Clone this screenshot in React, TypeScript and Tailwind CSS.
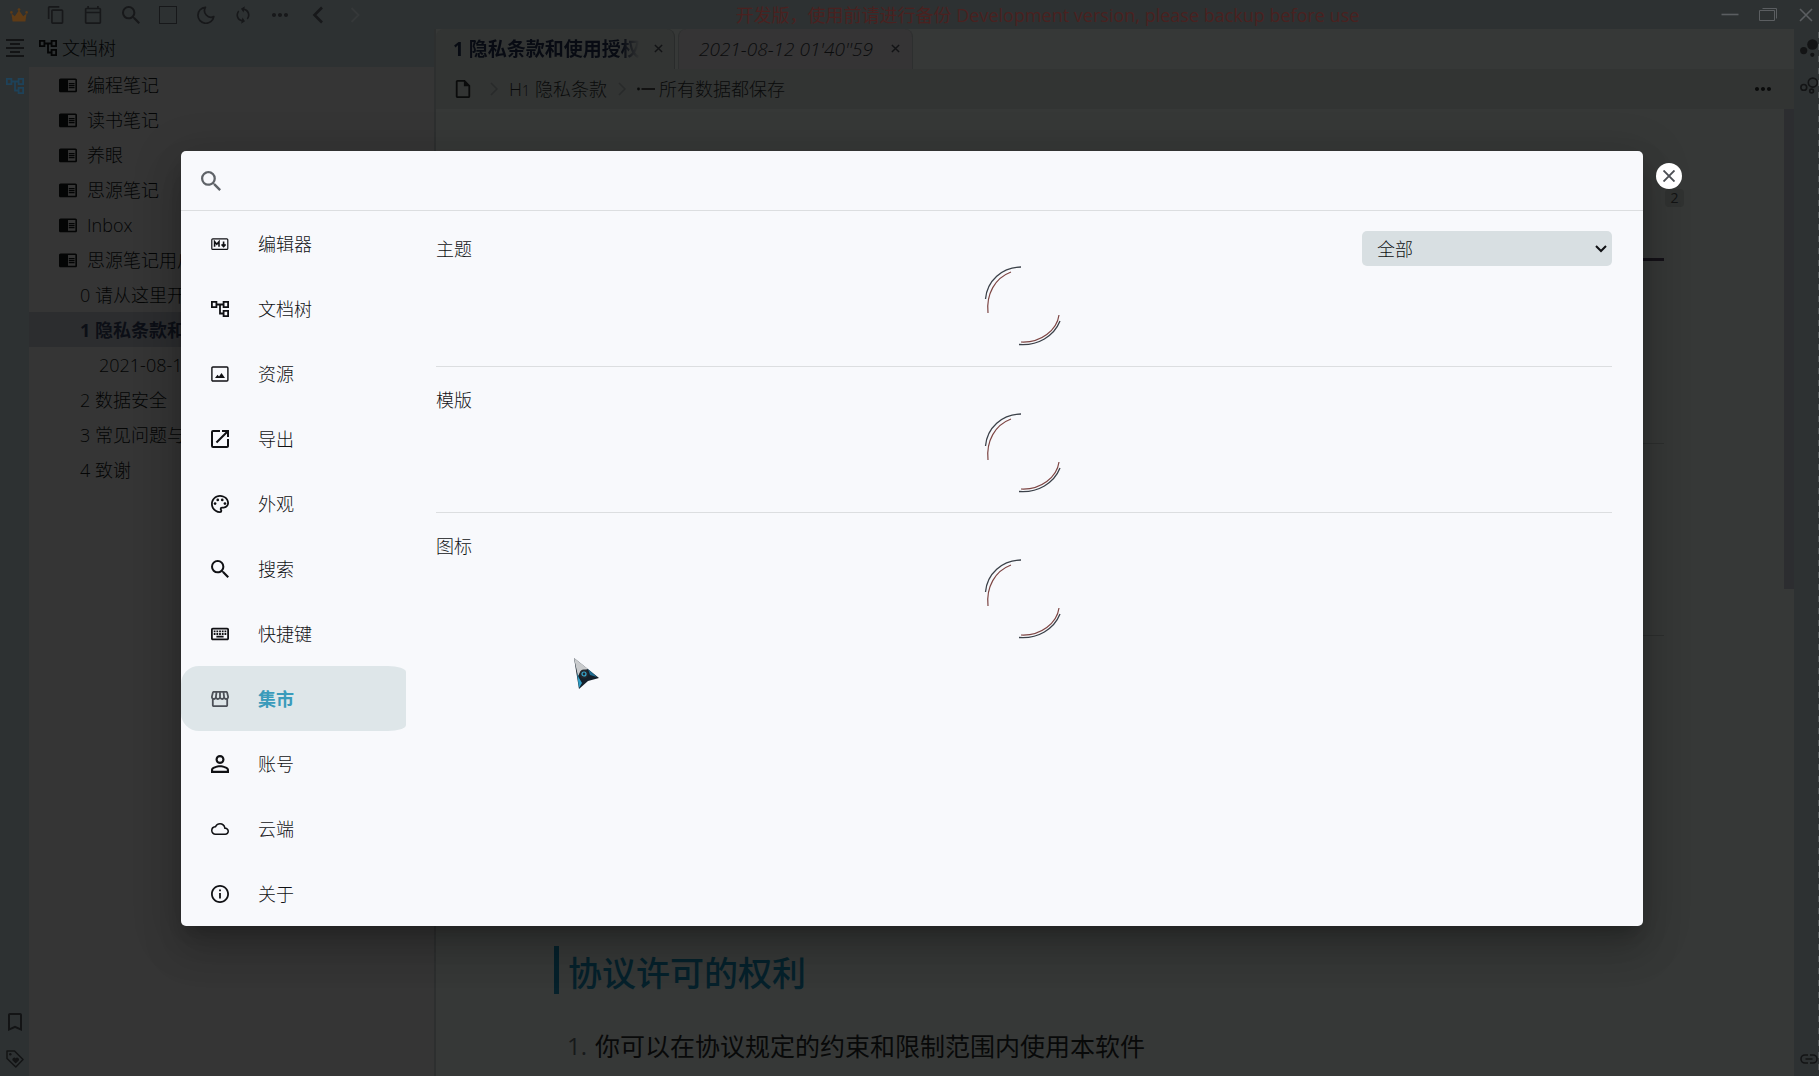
import type { ReactNode } from "react"
import {
  MdBookmarkBorder,
  MdChromeReaderMode,
  MdContentCopy,
  MdFormatAlignCenter,
  MdMoreHoriz,
  MdOpenInNew,
  MdOutlineAccountTree,
  MdOutlineCalendarToday,
  MdOutlineCloud,
  MdOutlineInfo,
  MdOutlineInsertDriveFile,
  MdOutlineKeyboard,
  MdOutlinePalette,
  MdOutlineStorefront,
  MdPersonOutline,
  MdSearch,
  MdSync,
} from "react-icons/md"

const ImageIcon = () => (
  <svg viewBox="0 0 18 18" className="size-[18px]" fill="none" stroke="currentColor">
    <rect x="0.9" y="2" width="16" height="14" rx="1" strokeWidth="1.4" />
    <path d="M4 13l2.5-3.2L8 11.5l2.5-3.6L14 13z" fill="currentColor" stroke="none" />
  </svg>
)

const MarkdownIcon = () => (
  <svg viewBox="0 0 18 18" className="size-[18px]" fill="none" stroke="currentColor">
    <rect x="0.8" y="3.8" width="16" height="10.6" rx="1" strokeWidth="1.2" />
    <path d="M3.6 11.8V6.6l2.2 2.6L8 6.6v5.2M12.6 6.4v5M10.6 9.4l2 2.2 2-2.2" strokeWidth="1.6" />
  </svg>
)

const TreeIcon = () => <MdOutlineAccountTree viewBox="2 2 20 20" size={18} />

const menu: { label: string; icon: ReactNode }[] = [
  { label: "编辑器", icon: <MarkdownIcon /> },
  { label: "文档树", icon: <TreeIcon /> },
  { label: "资源", icon: <ImageIcon /> },
  { label: "导出", icon: <MdOpenInNew viewBox="3 3 18 18" size={18} /> },
  { label: "外观", icon: <MdOutlinePalette viewBox="2 2 20 20" size={18} /> },
  { label: "搜索", icon: <MdSearch viewBox="3 3 17.5 17.5" size={18} /> },
  { label: "快捷键", icon: <MdOutlineKeyboard viewBox="2 2 20 20" size={18} /> },
  { label: "集市", icon: <MdOutlineStorefront viewBox="2 2 20 20" size={18} /> },
  { label: "账号", icon: <MdPersonOutline viewBox="4 4 16 16" size={18} /> },
  { label: "云端", icon: <MdOutlineCloud viewBox="0 0 24 24" size={18} /> },
  { label: "关于", icon: <MdOutlineInfo viewBox="2 2 20 20" size={18} /> },
]

const notebooks = ["编程笔记", "读书笔记", "养眼", "思源笔记", "Inbox", "思源笔记用户指南"]

const docs = [
  { label: "0 请从这里开始", className: "pl-[51px]" },
  { label: "1 隐私条款和使用授权", className: "pl-[51px] bg-[#2c2d2f] font-bold text-[#0c0f16]" },
  { label: "2021-08-12 01'40''59", className: "pl-[70px]" },
  { label: "2 数据安全", className: "pl-[51px]" },
  { label: "3 常见问题与解答", className: "pl-[51px]" },
  { label: "4 致谢", className: "pl-[51px]" },
]

function TopBar() {
  return (
    <header className="flex h-[29px] shrink-0 items-center justify-between bg-[#2d3132] text-[#17181a]">
      <div className="grid w-[374px] grid-cols-10 [&>button]:flex [&>button]:items-center [&>button]:justify-center">
        <button aria-label="会员">
          <svg viewBox="0 0 18 14" className="h-[14px] w-[18px]" fill="#5e3b16">
            <path d="M2.6 13.5L1.4 5.6l3.4 2.6L9 2.2l4.2 6 3.4-2.6-1.2 7.9z" />
            <circle cx="1.4" cy="4.4" r="1.3" />
            <circle cx="9" cy="1.6" r="1.4" />
            <circle cx="16.6" cy="4.4" r="1.3" />
          </svg>
        </button>
        <button aria-label="复制"><MdContentCopy viewBox="1 1 22 22" size={18} /></button>
        <button aria-label="日记"><MdOutlineCalendarToday viewBox="1 1 22 22" size={18} /></button>
        <button aria-label="搜索"><MdSearch viewBox="3 3 17.5 17.5" size={18} /></button>
        <button aria-label="窗口"><span className="block size-[18px] border border-current" /></button>
        <button aria-label="外观模式">
          <svg viewBox="0 0 18 18" className="size-[18px]" fill="none" stroke="currentColor" strokeWidth="1.7">
            <path d="M8.4 1.3A8 8 0 1 0 16.8 10.6 6.6 6.6 0 0 1 8.4 1.3z" strokeLinejoin="round" />
          </svg>
        </button>
        <button aria-label="同步"><MdSync viewBox="1 1 22 22" size={18} className="rotate-12" /></button>
        <button aria-label="更多"><MdMoreHoriz viewBox="3 3 18 18" size={18} /></button>
        <button aria-label="后退">
          <svg viewBox="0 0 18 18" className="size-[18px]" fill="none" stroke="currentColor" strokeWidth="2.6">
            <path d="M13 1.5L5.5 9l7.5 7.5" />
          </svg>
        </button>
        <button aria-label="前进" className="text-[#353839]">
          <svg viewBox="0 0 18 18" className="size-[18px]" fill="none" stroke="currentColor" strokeWidth="2">
            <path d="M5.5 2l7 7-7 7" />
          </svg>
        </button>
      </div>
      <div className="font-normal text-[#4a2120]">开发版，使用前请进行备份 Development version, please backup before use</div>
      <div className="flex items-center gap-5 pr-1 text-[#5b5e61]">
        <button aria-label="最小化">
          <svg viewBox="0 0 18 18" className="size-[18px]"><path d="M0.5 8.5h17" stroke="currentColor" strokeWidth="1.6" /></svg>
        </button>
        <button aria-label="还原">
          <svg viewBox="0 0 18 18" className="size-[18px]" fill="none" stroke="currentColor">
            <path d="M0.5 4.5h15v10h-15zM3.5 2.5h14v10" />
          </svg>
        </button>
        <button aria-label="关闭窗口">
          <svg viewBox="0 0 18 18" className="size-[18px]" fill="none" stroke="currentColor" strokeWidth="1.6">
            <path d="M3 3l12 12M15 3L3 15" />
          </svg>
        </button>
      </div>
    </header>
  )
}

function LeftDock() {
  return (
    <div className="flex w-[29px] shrink-0 flex-col items-center bg-[#2d3132] pt-[10px] pb-2 text-[#131415]">
      <button aria-label="大纲"><MdFormatAlignCenter viewBox="3 3 18 18" size={18} /></button>
      <button aria-label="文档树" className="mt-5 text-[#1e4259]"><TreeIcon /></button>
      <button aria-label="书签" className="mt-auto"><MdBookmarkBorder viewBox="2 2 20 20" size={20} /></button>
      <button aria-label="标签" className="mt-[18px]">
        <svg viewBox="0 0 18 18" className="size-[18px]" fill="none" stroke="currentColor" strokeWidth="1.5">
          <path d="M1 1h7.5L17 9.5 9.8 17 1 8.5z" strokeLinejoin="round" />
          <circle cx="4.3" cy="4.3" r="1.2" fill="currentColor" stroke="none" />
          <path d="M9.7 13.6L6.6 10.4a1.7 1.7 0 0 1 3.1-1.8 1.7 1.7 0 0 1 3.1 1.8z" fill="currentColor" stroke="none" />
        </svg>
      </button>
    </div>
  )
}

function RightDock() {
  return (
    <div className="flex w-[25px] shrink-0 bg-[#2d3132] text-[#131415]">
      <div className="flex flex-1 flex-col items-end pt-[10px] pb-2">
        <button aria-label="关系图">
          <svg viewBox="0 0 18 18" className="size-[18px]" fill="currentColor">
            <circle cx="12.5" cy="5.5" r="5.3" />
            <circle cx="3.7" cy="11.6" r="3.6" />
            <circle cx="12.3" cy="15.8" r="2.1" />
          </svg>
        </button>
        <button aria-label="全局关系图" className="mt-5">
          <svg viewBox="0 0 18 18" className="size-[18px]" fill="none" stroke="currentColor" strokeWidth="1.6">
            <circle cx="12.8" cy="5.6" r="4.5" />
            <circle cx="3.8" cy="10.4" r="2.9" />
            <circle cx="11.6" cy="14" r="1.9" />
          </svg>
        </button>
        <button aria-label="反链" className="mt-auto">
          <svg viewBox="0 0 18 18" className="size-[18px]" fill="none" stroke="currentColor" strokeWidth="1.6">
            <path d="M8 5H5a4 4 0 0 0 0 8h3M10 5h3a4 4 0 0 1 0 8h-3M5.5 9h7" />
          </svg>
        </button>
      </div>
      <div className="w-px bg-[repeating-linear-gradient(#2d3132_0_3px,#515556_3px_9px,#2d3132_9px_12px)]" />
    </div>
  )
}

function FileTree() {
  return (
    <aside className="w-[407px] shrink-0 overflow-hidden border-r-2 border-[#2d2f2f] bg-[#353535] text-[#040505]">
      <div className="flex h-[38px] items-center gap-[5px] bg-[#2d3132] pl-[10px]">
        <TreeIcon />
        <span>文档树</span>
      </div>
      <ul>
        {notebooks.map((name) => (
          <li key={name} className="flex h-[35px] items-center gap-[10px] pl-[30px]">
            <MdChromeReaderMode viewBox="1 1 22 22" size={18} />
            <span>{name}</span>
          </li>
        ))}
        {docs.map((doc) => (
          <li key={doc.label} className={`flex h-[35px] items-center ${doc.className}`}>
            {doc.label}
          </li>
        ))}
      </ul>
    </aside>
  )
}

function TabClose() {
  return (
    <button aria-label="关闭标签" className="flex size-5 shrink-0 items-center justify-center rounded-full text-[#121315]">
      <svg viewBox="0 0 10 10" className="size-[9px]" stroke="currentColor" strokeWidth="1.6">
        <path d="M1 1l8 8M9 1L1 9" />
      </svg>
    </button>
  )
}

function Chevron() {
  return (
    <svg viewBox="0 0 8 14" className="h-[14px] w-2" fill="none" stroke="#282a2a" strokeWidth="1.5">
      <path d="M1 1l6 6-6 6" />
    </svg>
  )
}

function Editor() {
  return (
    <main className="flex min-w-0 flex-1 flex-col bg-[#363837]">
      <div className="flex h-10 shrink-0 gap-[3px] text-[19px]">
        <div className="flex w-[239px] items-center justify-between rounded-t-lg border-r border-[#292b2b] bg-[#323433] pr-[6px] pb-px pl-[17px]">
          <span className="font-bold text-[#080b13] [mask-image:linear-gradient(to_right,black_90%,transparent)]">
            1 隐私条款和使用授权
          </span>
          <TabClose />
        </div>
        <div className="flex w-[235px] items-center justify-between rounded-t-lg border-x border-[#2d2f2f] bg-[#353435] pr-[7px] pb-px pl-5">
          <span className="text-[#0b0c0d] italic">2021-08-12 01'40''59</span>
          <TabClose />
        </div>
      </div>
      <nav className="flex h-10 shrink-0 items-center bg-[#323433] pr-[22px] pl-[18px] text-[#0a0b0b]">
        <MdOutlineInsertDriveFile viewBox="2 2 20 20" size={18} />
        <div className="ml-[18px] flex items-center gap-[11px]">
          <Chevron />
          <a href="#h1" className="flex items-center gap-[5px]">
            <span>H<span className="text-sm">1</span></span>隐私条款
          </a>
          <Chevron />
          <a href="#list" className="flex items-center gap-1">
            <svg viewBox="0 0 18 18" className="size-[18px]" fill="currentColor">
              <circle cx="1.5" cy="9" r="1.4" />
              <path d="M4.5 8.2H18v1.6H4.5z" />
            </svg>
            所有数据都保存
          </a>
        </div>
        <button aria-label="更多操作" className="ml-auto"><MdMoreHoriz viewBox="3 3 18 18" size={18} /></button>
      </nav>
      <div className="flex min-h-0 flex-1 overflow-hidden">
        <article className="relative flex-1 pt-[149px] pr-[120px] pl-[118px] font-normal">
          <span className="absolute top-20 right-[100px] h-[18px] w-[19px] rounded bg-[#303231] text-center text-sm leading-[18px] text-[#131414]">2</span>
          <div className="h-[3px] bg-[#141117]" />
          <hr className="mt-[182px] border-[#2d2f2e]" />
          <hr className="mt-[191px] border-[#2d2f2e]" />
          <h2 className="mt-[310px] border-l-[5px] border-[#06212b] pt-[6px] pl-[9px] text-[34px] leading-[42px] font-medium text-[#06212b]">
            协议许可的权利
          </h2>
          <ol className="mt-[34px] text-2xl leading-9">
            <li className="flex gap-2 pl-[13px]">
              <span className="text-[#17191a]">1.</span>
              <span className="text-[25px] text-[#080909]">你可以在协议规定的约束和限制范围内使用本软件</span>
            </li>
          </ol>
        </article>
        <div className="w-[10px]">
          <div className="h-[480px] bg-[#2c2d30]" />
        </div>
      </div>
    </main>
  )
}

function Spinner() {
  return (
    <svg viewBox="0 0 80 80" className="mx-auto size-20" fill="none" role="img" aria-label="加载中">
      <g stroke="#3b4149" strokeWidth="1.3">
        <path d="M1.5 33C3 15 18 1 37 1" />
        <path d="M76 55C70 70 54 80 35 78.5" />
      </g>
      <g stroke="#7d4543" strokeWidth="1.2">
        <path d="M4 47C2 28 11 12 27 6" />
        <path d="M75 49C73 64 57 77 37 76" />
      </g>
    </svg>
  )
}

function SettingsDialog() {
  return (
    <div className="absolute inset-0 flex pt-[151px] pr-[176px] pb-[150px] pl-[181px]">
      <div
        role="dialog"
        aria-label="设置"
        className="relative flex flex-1 flex-col rounded-[5px] bg-[#f8f9fc] text-[#101114] shadow-[0_11px_15px_-7px_rgba(0,0,0,0.2),0_24px_38px_3px_rgba(0,0,0,0.14),0_9px_46px_8px_rgba(0,0,0,0.12)]"
      >
        <div className="flex h-[60px] shrink-0 items-center gap-4 border-b border-[#dcdee0] px-5">
          <MdSearch viewBox="3 3 17.5 17.5" size={20} className="text-[#5f6368]" />
          <input aria-label="搜索设置" className="h-10 flex-1 bg-transparent outline-none" />
        </div>
        <div className="flex flex-1">
          <nav className="w-[225px] shrink-0">
            {menu.map(({ label, icon }) => (
              <button
                key={label}
                className={
                  label === "集市"
                    ? "flex h-[65px] w-full items-center gap-[29px] rounded-l-[18px] rounded-r-[18px_6px] bg-[#dee6e9] pl-[30px] font-bold text-[#3a9bbb] [&>svg]:text-[#4c5058]"
                    : "flex h-[65px] w-full items-center gap-[29px] pl-[30px]"
                }
              >
                {icon}
                {label}
              </button>
            ))}
          </nav>
          <div className="flex-1 pr-[31px] pl-[30px]">
            <section className="border-b border-[#dcdee0] pt-5 pb-5">
              <div className="flex h-[35px] items-center justify-between">
                <label htmlFor="theme">主题</label>
                <div className="relative">
                  <select id="theme" className="h-[35px] w-[250px] appearance-none rounded-[5px] bg-[#d8dfe2] pl-[15px]">
                    <option>全部</option>
                  </select>
                  <svg viewBox="0 0 12 8" className="pointer-events-none absolute top-[14px] right-[5px] h-2 w-3" fill="none" stroke="currentColor" strokeWidth="2">
                    <path d="M1 1l5 5 5-5" />
                  </svg>
                </div>
              </div>
              <Spinner />
            </section>
            <section className="border-b border-[#dcdee0] pt-5 pb-[19px]">
              <h3 className="leading-[26px]">模版</h3>
              <Spinner />
            </section>
            <section className="pt-5">
              <h3 className="leading-[26px]">图标</h3>
              <Spinner />
            </section>
          </div>
        </div>
        <button
          aria-label="关闭"
          className="absolute top-3 -right-[39px] flex size-[26px] items-center justify-center rounded-full bg-white text-[#4b4e53]"
        >
          <svg viewBox="0 0 12 12" className="size-3" stroke="currentColor" strokeWidth="1.9">
            <path d="M0.5 0.5l11 11M11.5 0.5l-11 11" />
          </svg>
        </button>
      </div>
    </div>
  )
}

function Pointer() {
  return (
    <svg viewBox="0 0 26 32" className="pointer-events-none absolute top-[658px] left-[574px] h-8 w-[26px]">
      <path d="M0 0L25 20 14 23 5 31z" fill="#14202b" />
      <path d="M0 0L14 11 7 13 4 18z" fill="#c9cbcd" />
      <path d="M3 15l2 15 3-5-3-5z" fill="#2f9cc4" />
      <path d="M14 11l9 8-7-2z" fill="#1f6d92" />
      <circle cx="10" cy="16" r="4.5" fill="#23272e" />
      <circle cx="10" cy="16" r="2" fill="none" stroke="#35a9d1" strokeWidth="1.2" />
    </svg>
  )
}

export default function App() {
  return (
    <div className="relative flex h-screen flex-col overflow-hidden bg-[#2d3132] font-['Open_Sans','Noto_Sans_CJK_SC',sans-serif] text-lg leading-6 font-light whitespace-nowrap">
      <TopBar />
      <div className="flex min-h-0 flex-1">
        <LeftDock />
        <FileTree />
        <Editor />
        <RightDock />
      </div>
      <SettingsDialog />
      <Pointer />
    </div>
  )
}
